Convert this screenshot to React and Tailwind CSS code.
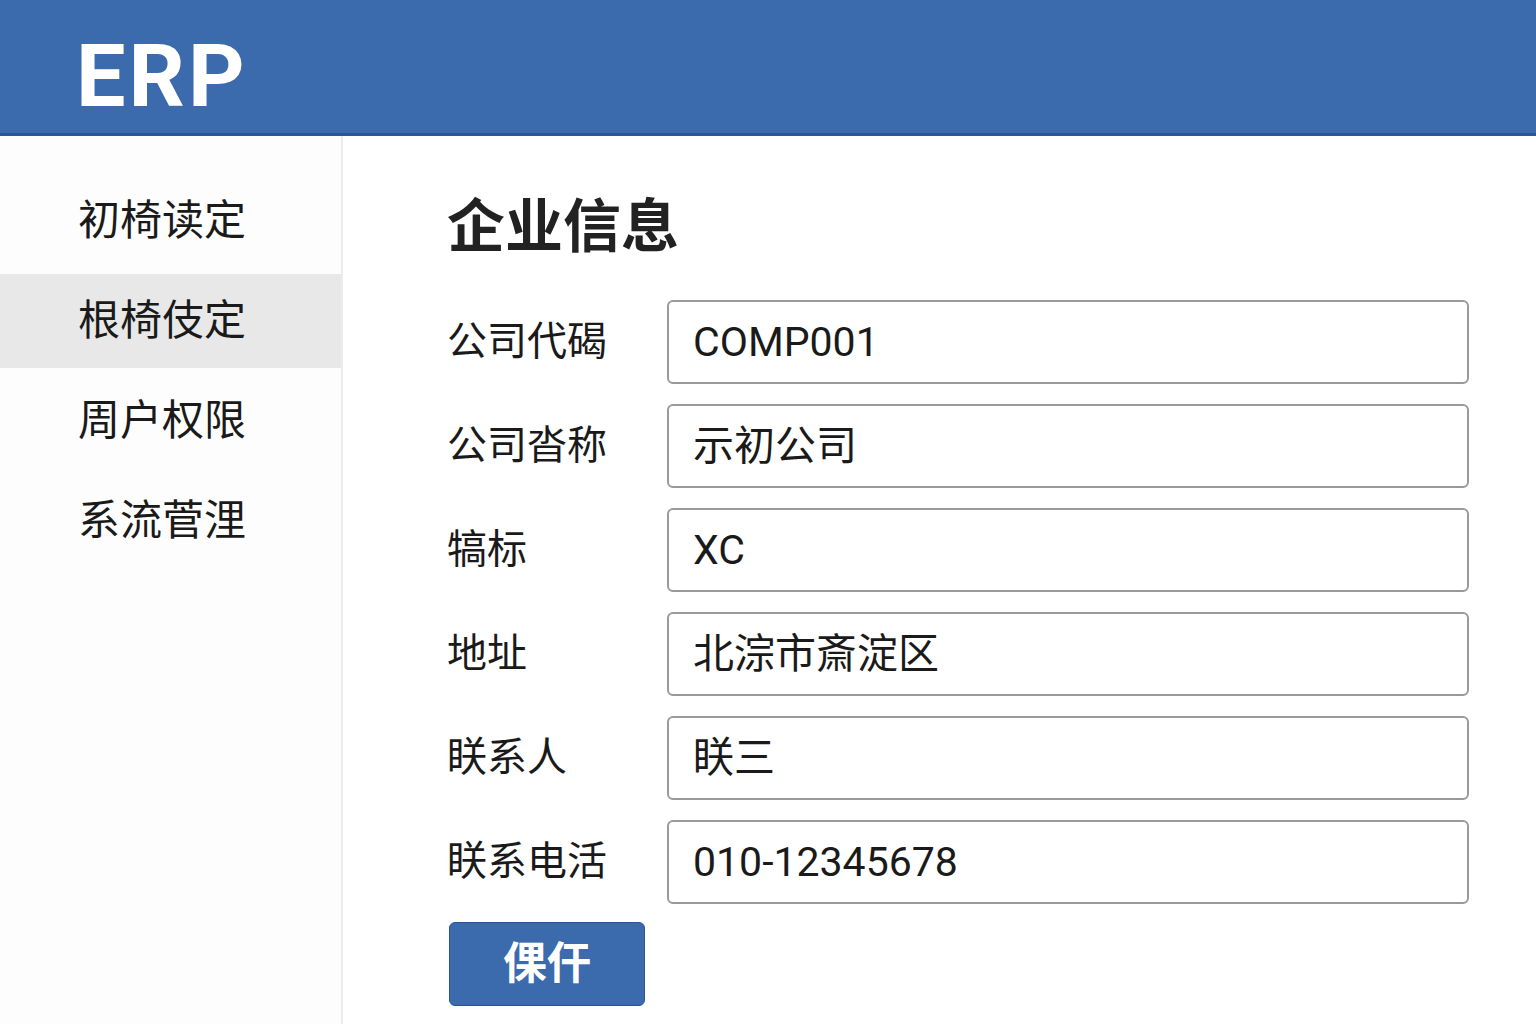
import React from "react";

const menu = [
  { label: "初椅读定" },
  { label: "根椅伎定", active: true },
  { label: "周户权限" },
  { label: "系流菅浬" },
];

const fields = [
  { label: "公司代碣", value: "COMP001" },
  { label: "公司沓称", value: "示初公司" },
  { label: "犒标", value: "XC" },
  { label: "地址", value: "北淙市斎淀区" },
  { label: "眹系人", value: "眹三" },
  { label: "眹系电活", value: "010-12345678" },
];

export default function App() {
  return (
    <div
      className="h-[1024px] w-[1536px] overflow-hidden bg-white flex flex-col text-[#1a1a1a]"
      style={{ fontFamily: 'Roboto, "Noto Sans CJK SC", sans-serif' }}
    >
      <header className="h-[136px] shrink-0 bg-[#3b6aad] border-b-[3px] border-[#2c5597] flex items-center pl-[76px] pt-[18px]">
        <span
          className="text-[88px] font-bold text-white leading-none tracking-[3px]"
          style={{ fontFamily: 'Roboto, "Noto Sans", sans-serif' }}
        >
          ERP
        </span>
      </header>
      <div className="flex flex-1 min-h-0">
        <aside className="w-[343px] shrink-0 bg-[#fdfdfd] border-r-2 border-[#ececec] pt-[38px]">
          {menu.map((m) => (
            <div
              key={m.label}
              className={`h-[94px] mb-[6px] flex items-center pl-[78px] text-[42px] leading-none ${
                m.active ? "bg-[#e8e8e8]" : ""
              }`}
            >
              {m.label}
            </div>
          ))}
        </aside>
        <main className="flex-1 pl-[104px] pr-[67px] pt-[62px]">
          <h1 className="text-[58px] font-bold leading-none mb-[44px] text-[#222]">企业信息</h1>
          <div className="flex flex-col gap-[20px]">
            {fields.map((f) => (
              <div key={f.label} className="flex items-center">
                <label className="w-[220px] shrink-0 text-[40px] leading-none">{f.label}</label>
                <div className="flex-1 h-[84px] rounded-[6px] border-2 border-[#9a9a9a] flex items-center pl-[24px] text-[41px] leading-none">
                  {f.value}
                </div>
              </div>
            ))}
          </div>
          <button className="mt-[18px] ml-[2px] w-[196px] h-[84px] rounded-[6px] bg-[#3b6aad] border border-[#2c5597] text-white text-[44px] font-bold leading-none">
            倮仠
          </button>
        </main>
      </div>
    </div>
  );
}
